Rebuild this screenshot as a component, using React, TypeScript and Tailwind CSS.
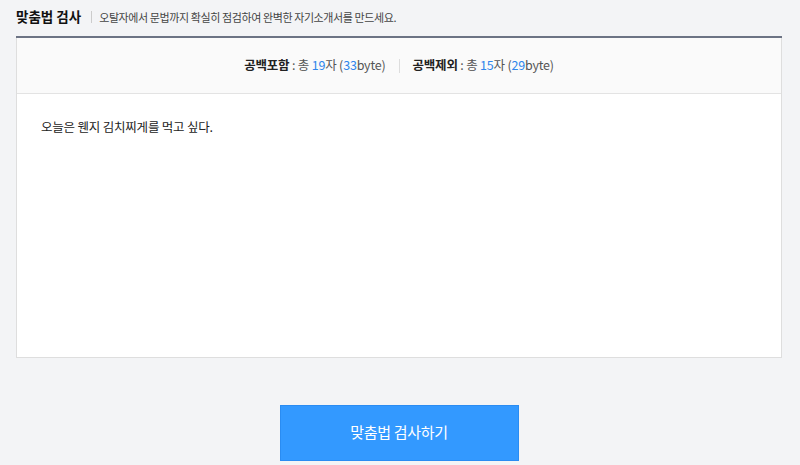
export default function App() {
  const font = { fontFamily: '"Noto Sans CJK KR", "Noto Sans", sans-serif' };
  return (
    <div className="w-[800px] h-[465px] bg-[#f3f4f6] overflow-hidden" style={font}>
      <div className="h-9 flex items-center pl-4 pb-[2px]">
        <span className="text-[13.5px] font-bold text-[#111] leading-none tracking-[0px]">맞춤법 검사</span>
        <span className="ml-[10px] w-px h-[12px] bg-[#cccccc]" />
        <span className="ml-[7px] text-[11px] text-[#444] leading-none tracking-[-0.4px]">
          오탈자에서 문법까지 확실히 점검하여 완벽한 자기소개서를 만드세요.
        </span>
      </div>
      <div className="ml-4 w-[766px] border-t-2 border-[#6c7384]">
        <div className="border-x border-b border-[#dedede]">
          <div className="h-[56px] bg-[#fafafa] border-b border-[#e3e3e3] flex items-center justify-center text-[12.5px] leading-none tracking-[-0.2px]">
            <span className="font-bold text-[#222]">공백포함</span>
            <span className="text-[#555]">&nbsp;: 총&nbsp;</span>
            <span className="text-[#2f86eb]">19</span>
            <span className="text-[#555]">자 (</span>
            <span className="text-[#2f86eb]">33</span>
            <span className="text-[#555]">byte)</span>
            <span className="mx-[13px] w-px h-[14px] bg-[#dddddd]" />
            <span className="font-bold text-[#222]">공백제외</span>
            <span className="text-[#555]">&nbsp;: 총&nbsp;</span>
            <span className="text-[#2f86eb]">15</span>
            <span className="text-[#555]">자 (</span>
            <span className="text-[#2f86eb]">29</span>
            <span className="text-[#555]">byte)</span>
          </div>
          <div className="h-[263px] bg-white pl-6 pt-[27px] text-[12.5px] text-[#222] leading-none tracking-[-0.2px]">
            오늘은 웬지 김치찌게를 먹고 싶다.
          </div>
        </div>
        <div className="flex justify-center pt-[47px]">
          <button className="w-[239px] h-[56px] bg-[#3399ff] border border-[#2a8cf2] text-white text-[15px] tracking-[-0.3px] pb-[2px]">
            맞춤법 검사하기
          </button>
        </div>
      </div>
    </div>
  );
}
